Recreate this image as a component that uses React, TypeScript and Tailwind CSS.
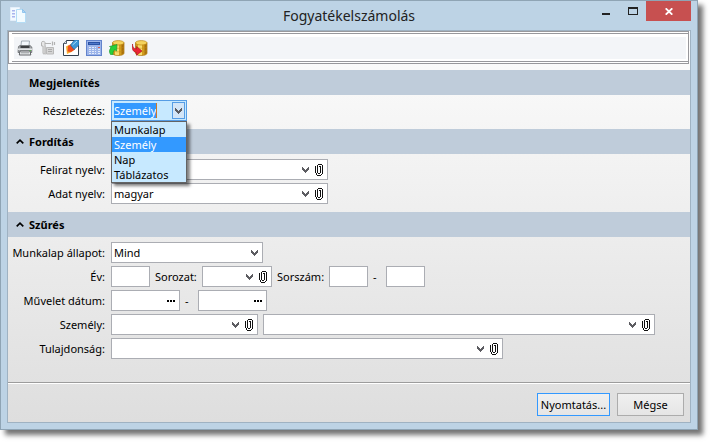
// src/App.tsx
import { useState } from 'react';
import type { ReactNode } from 'react';

const MODES = ['Munkalap', 'Személy', 'Nap', 'Táblázatos'];

// --- Icons ---
function Chevron({ className = '' }: { className?: string }) {
  return (
    <svg viewBox="0 0 7 6" shapeRendering="crispEdges" className={`h-[6px] w-[7px] ${className}`} aria-hidden="true">
      <path
        fill="#5c5c61"
        d="M0 0h1v1H0zM6 0h1v1H6zM0 1h2v1H0zM5 1h2v1H5zM0 2h3v1H0zM4 2h3v1H4zM1 3h5v1H1zM2 4h3v1H2zM3 5h1v1H3z"
      />
    </svg>
  );
}

function Clip() {
  return (
    <svg viewBox="0 0 8 12" shapeRendering="crispEdges" className="h-3 w-2" aria-hidden="true">
      <path
        fill="#111"
        d="M3 0h4v1H3zM2 1h1v8H2zM7 1h1v9H7zM0 2h1v7H0zM5 2h1v7H5zM4 2h1v1H4zM3 9h2v1H3zM1 9h1v2H1zM6 10h1v1H6zM2 11h4v1H2z"
      />
    </svg>
  );
}

function Caret() {
  return (
    <svg viewBox="0 0 8 5" className="h-[5px] w-2" aria-hidden="true">
      <path d="M.7 4.3 4 1.2l3.3 3.1" fill="none" stroke="#000" strokeWidth="1.7" />
    </svg>
  );
}

function DocIcon() {
  return (
    <svg viewBox="0 0 16 16" className="size-4" aria-hidden="true">
      <path d="M.5.5h9v13h-9z" fill="#f3faff" stroke="#e4effa" />
      <path d="M2 3h3v1.500H2zM2 6h3v1.500H2zM2 9h3v1.500H2z" fill="#a9b4ee" />
      <path d="M6.500 2.500h6l3 3v10h-9z" fill="#f2fbff" stroke="#b4dcf5" />
      <path d="M12.500 2.500v3h3z" fill="#b5daf5" stroke="#77b4e8" strokeWidth=".7" />
    </svg>
  );
}

function PrinterIcon() {
  return (
    <svg viewBox="0 0 16 16" className="size-4" aria-hidden="true">
      <path d="M4.500 1h8l-.7 6H3.800z" fill="#f4f8fc" stroke="#8f99a3" strokeWidth=".8" />
      <path d="M1.500 6.500 3 5.500h10l1.800 1.500v5.500H1z" fill="#a4a7ab" stroke="#6a6d70" strokeWidth=".8" />
      <path d="M3.500 6h9v2h-9z" fill="#3d3f42" />
      <path d="M1 8.500h14v1.500H1z" fill="#e3e5e7" />
      <path d="M3 11h10l.8 4H2.300z" fill="#e9ebed" stroke="#55585b" strokeWidth=".9" />
      <path d="M4 12.800h8" stroke="#909497" />
      <path d="M12.500 10.500h1.500" stroke="#5cb54d" />
    </svg>
  );
}

function PlugIcon() {
  return (
    <svg viewBox="0 0 16 16" className="size-4" aria-hidden="true">
      <path d="M1.500 2.500c0-1.500 3.500-1.500 3.500 0v10.500c0 1.500-2 1.500-2 0V6H1.500z" fill="#e7e7e7" stroke="#b2b2b2" />
      <path d="M5 3.500h6M12.500 1.500v4M14.500 2v3" stroke="#b2b2b2" strokeWidth="1.200" />
      <path d="M6.500 7.500h7v6.500h-7z" fill="#d5d5d5" stroke="#b9b9b9" />
      <path d="M8 9.500h4M8 11.500h4" stroke="#aaa" />
      <path d="M5.500 5.500v9" stroke="#c5c5c5" />
    </svg>
  );
}

function BrushIcon() {
  return (
    <svg viewBox="0 0 16 16" className="size-4" aria-hidden="true">
      <path d="M3.500.5h12v15H.500V3.500z" fill="#fff" stroke="#34404e" />
      <path d="M.5 3.500h3v-3" fill="#dfe6ec" stroke="#34404e" strokeWidth=".8" />
      <path d="m4 14-1-7.500 5-2.500 4 5-3.500 3z" fill="#f9b233" />
      <path d="m4.500 11.500.5-5.500 3-1.500 4 5-4 2.500z" fill="#ef4c1c" />
      <path d="M7.500 5 11.500 0H16v5l-5 4.500z" fill="#3d97d6" stroke="#1c66a8" strokeWidth=".7" />
      <path d="m9.500 5 4.500-4" stroke="#a7dcf7" />
    </svg>
  );
}

function CalcIcon() {
  return (
    <svg viewBox="0 0 16 16" shapeRendering="crispEdges" className="size-4" aria-hidden="true">
      <path d="M0 0h16v16H0z" fill="#6283cc" />
      <path d="M1 1h14v14H1z" fill="#9db5ea" />
      <path d="M2 2h12v3H2z" fill="#2a51a4" />
      <path d="M3 3h10v1H3z" fill="#4e78ca" />
      <path
        d="M3 7h2v1H3zM6 7h2v1H6zM9 7h1v1H9zM3 9h2v1H3zM6 9h2v1H6zM9 9h1v1H9zM12 9h2v1h-2zM3 11h2v1H3zM6 11h2v1H6zM9 11h1v1H9zM12 11h2v1h-2zM3 13h2v1H3zM6 13h2v1H6zM9 13h1v1H9zM12 13h2v1h-2z"
        fill="#e3ebfa"
      />
      <path d="M12 7h2v1h-2z" fill="#e0604f" />
    </svg>
  );
}

function DatabaseIcon({ kind }: { kind: 'load' | 'save' }) {
  return (
    <svg viewBox="0 0 16 16" className="size-4" aria-hidden="true">
      <path d="M3.500 2.800v10.400c0 3 11.500 3 11.500 0V2.800z" fill="#d39d1d" stroke="#a56f0c" strokeWidth=".7" />
      <path d="M6 4v10.800c1.500.5 3 .5 4 .3V4.500z" fill="#f7dd6d" />
      <path d="M12.500 4.500v10l2.200-1.300V3.500z" fill="#a8700d" />
      <ellipse cx="9.250" cy="2.800" rx="5.750" ry="2.200" fill="#f5d35c" stroke="#bd8616" strokeWidth=".7" />
      <path d="M3.500 6.800c1.500 2 10 2 11.500 0M3.500 10.300c1.500 2 10 2 11.500 0" fill="none" stroke="#c08a1a" strokeWidth=".5" />
      {kind === 'load' ? (
        <path d="M1.500 14.500C-.2 12 .3 9.500 2 7.800L.5 6.500 8 4.500 7.500 11 5.800 9.700C4 11 4 12.500 4 14.500z" fill="#27d03a" stroke="#129323" strokeWidth=".6" />
      ) : (
        <path d="M.5 4c0 3 1 4.500 4 5V6.500L10 11l-5.500 4.300V12.500C.5 12-.3 8 .5 4z" fill="#ea2434" stroke="#a8101e" strokeWidth=".6" />
      )}
    </svg>
  );
}

// --- Form pieces ---
function Section({ title, fixed = false, children }: { title: string; fixed?: boolean; children: ReactNode }) {
  const [open, setOpen] = useState(true);
  const shown = fixed || open;

  return (
    <section>
      <h2 className="flex h-[25px] items-center bg-[#bfccda] pl-2 font-bold">
        {fixed ? (
          <span className="pl-[13px]">{title}</span>
        ) : (
          <button type="button" aria-expanded={open} onClick={() => setOpen(!open)} className="flex items-center gap-[5px]">
            <Caret />
            {title}
          </button>
        )}
      </h2>
      {shown && <div className="flex flex-col gap-[3px] pt-[5px] pb-2">{children}</div>}
    </section>
  );
}

function Row({ label, htmlFor, children }: { label: string; htmlFor: string; children: ReactNode }) {
  return (
    <div className="flex h-[21px] items-center">
      <label htmlFor={htmlFor} className="mr-[6px] flex w-[97px] shrink-0 justify-end whitespace-nowrap">
        {label}
      </label>
      {children}
    </div>
  );
}

function Combo({
  id,
  name,
  options = [''],
  clip = true,
  className,
}: {
  id: string;
  name?: string;
  options?: string[];
  clip?: boolean;
  className: string;
}) {
  return (
    <div className={`flex h-[21px] items-center border border-[#abadb3] bg-white ${className}`}>
      <div className="relative flex h-full min-w-0 flex-1 items-center">
        <select id={id} aria-label={name} className="h-full w-full appearance-none pr-3 pl-[2px] outline-none">
          {options.map((o) => (
            <option key={o}>{o}</option>
          ))}
        </select>
        <Chevron className="pointer-events-none absolute right-1" />
      </div>
      {clip && (
        <button type="button" aria-label="Csatolás" className="mr-1 ml-[2px]">
          <Clip />
        </button>
      )}
    </div>
  );
}

function DateBox({ id, name }: { id: string; name?: string }) {
  return (
    <div className="flex h-[21px] w-[69px] items-center border border-[#abadb3] bg-white">
      <input id={id} aria-label={name} className="h-full min-w-0 flex-1 pl-[2px] outline-none" />
      <button type="button" aria-label="Naptár" className="mr-1 flex gap-px">
        <span className="size-[2px] bg-black" />
        <span className="size-[2px] bg-black" />
        <span className="size-[2px] bg-black" />
      </button>
    </div>
  );
}

function NumberBox({ id, name }: { id: string; name?: string }) {
  return (
    <input id={id} aria-label={name} className="h-[21px] w-[39px] border border-[#abadb3] bg-white px-[2px] outline-none" />
  );
}

function ModePicker() {
  const [mode, setMode] = useState('Személy');
  const [open, setOpen] = useState(true);

  return (
    <div className="relative flex h-[21px] w-[76px] items-center border border-[#569de5] bg-[#c7e9ff] pl-[2px]">
      <select
        id="mode"
        value={mode}
        onChange={(e) => setMode(e.target.value)}
        className="h-[15px] appearance-none border-r border-[#d07828] bg-[#3399ff] leading-[15px] text-white outline-none [field-sizing:content]"
      >
        {MODES.map((m) => (
          <option key={m}>{m}</option>
        ))}
      </select>
      <button
        type="button"
        aria-label="Lista"
        aria-expanded={open}
        onClick={() => setOpen(!open)}
        className="mr-px ml-auto flex h-[17px] w-[13px] items-center justify-center border border-[#569de5] bg-[#d3e5f7]"
      >
        <Chevron />
      </button>
      {open && (
        <ul
          role="listbox"
          aria-label="Részletezés"
          className="absolute top-5 -left-px z-10 w-[76px] border border-[#646464] bg-[#c7e9ff] shadow-[3px_3px_3px_rgba(0,0,0,0.5)]"
        >
          {MODES.map((m) => (
            <li
              key={m}
              role="option"
              aria-selected={m === mode}
              onClick={() => {
                setMode(m);
                setOpen(false);
              }}
              className={`h-[15px] pl-[2px] leading-[15px] ${m === mode ? 'bg-[#3399ff] text-white' : ''}`}
            >
              {m}
            </li>
          ))}
        </ul>
      )}
    </div>
  );
}

const TOOLS = [
  { name: 'Nyomtatás', icon: <PrinterIcon /> },
  { name: 'Csatlakozás', icon: <PlugIcon /> },
  { name: 'Szerkesztés', icon: <BrushIcon /> },
  { name: 'Számológép', icon: <CalcIcon /> },
  { name: 'Betöltés', icon: <DatabaseIcon kind="load" /> },
  { name: 'Mentés', icon: <DatabaseIcon kind="save" /> },
];

export default function App() {
  return (
    <div className="min-h-screen bg-white pr-[12px] pb-[12px] font-['Noto_Sans','Open_Sans',sans-serif] text-[11px] leading-4 text-black">
      <div className="border border-[#8fa4b4] bg-[#bdd3e5] px-[6px] pb-[6px] shadow-[5px_5px_5px_rgba(0,0,0,0.55)]">
        {/* Title bar */}
        <header className="relative flex h-[29px] items-center justify-center">
          <span className="absolute top-[6px] left-[3px]">
            <DocIcon />
          </span>
          <h1 className="text-[14px] leading-5 text-[#222]">Fogyatékelszámolás</h1>
          <div className="absolute top-0 right-0 flex h-5">
            <button type="button" aria-label="Kis méret" className="flex w-[26px] items-end justify-center pb-[6px]">
              <span className="h-[2px] w-2 bg-[#222]" />
            </button>
            <button type="button" aria-label="Teljes méret" className="flex w-[27px] items-center justify-center">
              <span className="h-2 w-[10px] border border-t-2 border-[#222]" />
            </button>
            <button type="button" aria-label="Bezárás" className="flex w-[45px] items-center justify-center bg-[#c75050]">
              <svg viewBox="0 0 8 7" className="h-[7px] w-2" aria-hidden="true">
                <path d="M.7.3l6.600 6.400M7.300.3L.7 6.700" stroke="#fff" strokeWidth="1.800" />
              </svg>
            </button>
          </div>
        </header>

        <form
          onSubmit={(e) => e.preventDefault()}
          className="border border-[#9fb2c2] bg-linear-to-b from-[#fdfdfd] to-[#dedede]"
        >
          <div className="mr-px mb-[6px] border border-[#98989c] bg-white py-px pl-[3px]">
            <div className="border-y border-[#98989c] px-[2px] pt-[3px] pb-[2px]">
              <div role="toolbar" className="flex h-[22px] items-center gap-[7px] bg-[#f3f5f8] pl-[3px]">
                {TOOLS.map((t) => (
                  <button key={t.name} type="button" aria-label={t.name}>
                    {t.icon}
                  </button>
                ))}
              </div>
            </div>
          </div>

          <Section title="Megjelenítés" fixed>
            <Row label="Részletezés:" htmlFor="mode">
              <ModePicker />
            </Row>
          </Section>

          <Section title="Fordítás">
            <Row label="Felirat nyelv:" htmlFor="caption-lang">
              <Combo id="caption-lang" className="w-[217px]" />
            </Row>
            <Row label="Adat nyelv:" htmlFor="data-lang">
              <Combo id="data-lang" options={['magyar']} className="w-[217px]" />
            </Row>
          </Section>

          <Section title="Szűrés">
            <Row label="Munkalap állapot:" htmlFor="status">
              <Combo id="status" options={['Mind']} clip={false} className="w-[152px]" />
            </Row>
            <Row label="Év:" htmlFor="year">
              <NumberBox id="year" />
              <label htmlFor="series" className="w-[52px] pl-[5px]">
                Sorozat:
              </label>
              <Combo id="series" className="w-[70px]" />
              <label htmlFor="serial-from" className="w-[57px] pl-[5px]">
                Sorszám:
              </label>
              <NumberBox id="serial-from" />
              <span className="w-[18px] pl-[5px]">-</span>
              <NumberBox id="serial-to" name="Sorszám vége" />
            </Row>
            <Row label="Művelet dátum:" htmlFor="date-from">
              <DateBox id="date-from" />
              <span className="w-[18px] pl-[5px]">-</span>
              <DateBox id="date-to" name="Művelet dátum vége" />
            </Row>
            <Row label="Személy:" htmlFor="person">
              <Combo id="person" className="mr-[5px] w-[147px]" />
              <Combo id="person-name" name="Személy neve" className="w-[392px]" />
            </Row>
            <Row label="Tulajdonság:" htmlFor="property">
              <Combo id="property" className="w-[392px]" />
            </Row>
          </Section>

          <footer className="mt-[15px] flex justify-end gap-[7px] border-t border-[#9c9c9c] pt-[10px] pr-[6px] pb-[6px] shadow-[inset_0_1px_0_#fff]">
            <button type="submit" className="h-[23px] w-[73px] border border-[#3399ff] bg-linear-to-b from-[#f0f0f0] to-[#e5e5e5]">
              Nyomtatás...
            </button>
            <button type="button" className="h-[23px] w-[67px] border border-[#acacac] bg-linear-to-b from-[#f0f0f0] to-[#e5e5e5]">
              Mégse
            </button>
          </footer>
        </form>
      </div>
    </div>
  );
}
